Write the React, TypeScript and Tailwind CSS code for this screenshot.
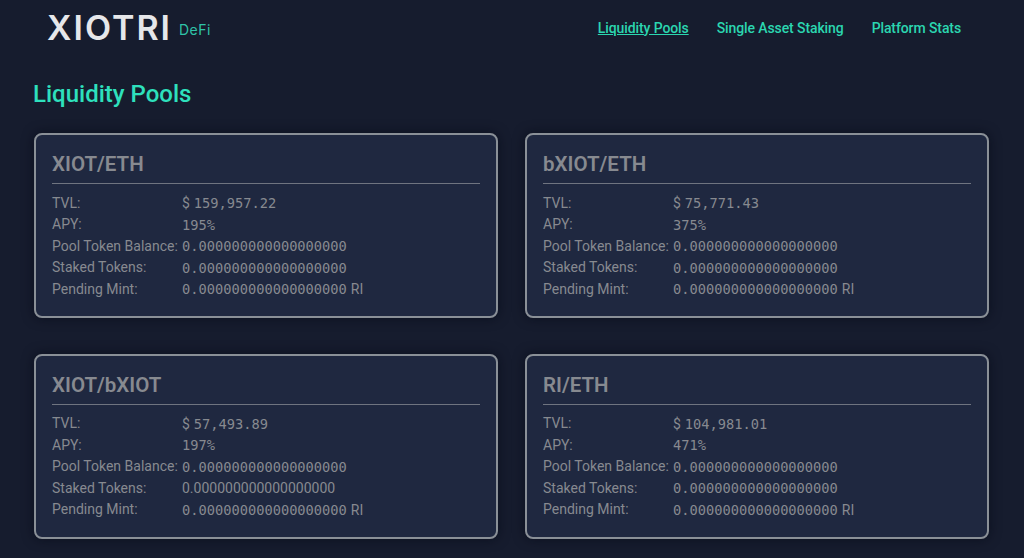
const pools = [
  { name: "XIOT/ETH", tvl: "159,957.22", apy: "195%", staked: "0.000000000000000000", plain: false },
  { name: "bXIOT/ETH", tvl: "75,771.43", apy: "375%", staked: "0.000000000000000000", plain: false },
  { name: "XIOT/bXIOT", tvl: "57,493.89", apy: "197%", staked: "0.000000000000000000", plain: true },
  { name: "RI/ETH", tvl: "104,981.01", apy: "471%", staked: "0.000000000000000000", plain: false },
];
const ZERO = "0.000000000000000000";

function Row({ label, children }: { label: string; children: React.ReactNode }) {
  return (
    <div className="flex h-[21.5px] items-center">
      <span className="w-[130px] shrink-0 text-[14px] whitespace-nowrap">{label}</span>
      <span className="whitespace-nowrap">{children}</span>
    </div>
  );
}
const Mono = ({ children }: { children: React.ReactNode }) => (
  <span className="font-['DejaVu_Sans_Mono',monospace] text-[13.7px]">{children}</span>
);

function Card({ p }: { p: (typeof pools)[number] }) {
  return (
    <div className="h-[185px] rounded-lg border-2 border-[#8a9097] bg-[#1f2840] px-[16px] pt-[16px] text-[#878a90] shadow-[0_0_12px_rgba(5,8,20,0.6)]">
      <h2 className="border-b border-[#6f7480] pb-[6px] text-[20.5px] leading-[26px] font-semibold">{p.name}</h2>
      <div className="mt-[8.5px]">
        <Row label="TVL:"><span className="text-[14px]">$</span> <Mono>{p.tvl}</Mono></Row>
        <Row label="APY:"><Mono>{p.apy}</Mono></Row>
        <Row label="Pool Token Balance:"><Mono>{ZERO}</Mono></Row>
        <Row label="Staked Tokens:">
          {p.plain ? <span className="text-[14px]">{p.staked}</span> : <Mono>{p.staked}</Mono>}
        </Row>
        <Row label="Pending Mint:"><Mono>{ZERO}</Mono> <span className="text-[14px]">RI</span></Row>
      </div>
    </div>
  );
}

export default function App() {
  return (
    <div className="h-[558px] overflow-hidden bg-[#161c2e] font-['Roboto',sans-serif]">
      <header className="flex h-[56px] items-center justify-between pr-[63px] pl-[47px]">
        <div className="flex items-center">
          <span className="font-['Inter',sans-serif] text-[34px] leading-none font-semibold tracking-[2px] text-[#e6e7ea]">XIOTRI</span>
          <span className="mt-[2px] ml-[7px] font-['Inter',sans-serif] text-[14px] tracking-[0.5px] text-[#2fc4a8]">DeFi</span>
        </div>
        <nav className="flex gap-[28px] text-[14px] font-medium tracking-[-0.1px] text-[#2bd6b0]">
          <a className="underline">Liquidity Pools</a>
          <a>Single Asset Staking</a>
          <a>Platform Stats</a>
        </nav>
      </header>
      <main className="pt-[22px] pl-[34px]">
        <h1 className="-ml-px text-[24px] leading-[32px] font-medium text-[#2ee0bd]">Liquidity Pools</h1>
        <div className="mt-[23px] grid grid-cols-[464px_464px] gap-x-[27px] gap-y-[35.5px]">
          {pools.map((p) => <Card key={p.name} p={p} />)}
        </div>
      </main>
    </div>
  );
}
